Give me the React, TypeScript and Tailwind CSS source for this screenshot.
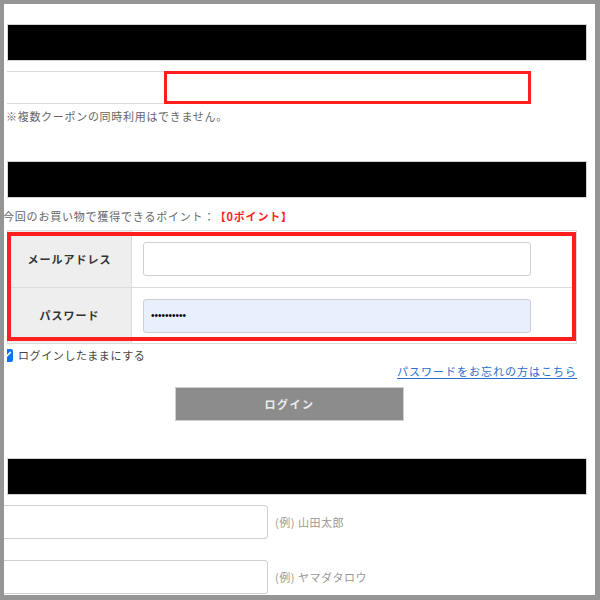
import { Check } from "lucide-react";

const font = "font-['Noto_Sans_CJK_JP','Noto_Sans',sans-serif]";

function Bar() {
    return <div className="h-[37px] w-[580px] bg-black border border-[#d4d4d4]" />;
}

export default function App() {
    return (
        <div className={`w-[600px] h-[600px] bg-[#959595] pt-[4px] pl-[4px] pr-[5px] pb-[5px] ${font}`}>
            <div className="h-full bg-white overflow-hidden">
                <div className="pl-[3px] pt-[20px]">
                    {/* クーポン */}
                    <Bar />
                    <div className="mt-[10px] flex h-[33px]">
                        <div className="w-[157px] border-y border-[#dcdcdc]" />
                        <div className="w-[367px] border-[3px] border-[#ff1f1f]" />
                    </div>
                    <p className="mt-[4px] -ml-[1px] text-[11px] leading-[16px] tracking-[0.7px] text-[#666]">
                        ※複数クーポンの同時利用はできません。
                    </p>

                    {/* ログイン */}
                    <div className="mt-[37px]">
                        <Bar />
                    </div>
                    <p className="mt-[10px] -ml-[4px] text-[11px] leading-[16px] tracking-[0.8px] text-[#666]">
                        今回のお買い物で獲得できるポイント：
                        <span className="ml-[5px] font-bold text-[#ff1f1f] tracking-[0.8px]">【0ポイント】</span>
                    </p>

                    <div className="relative mt-[6px] w-[570px] border border-[#dcdcdc]">
                        <div className="flex h-[57px] border-b border-[#dcdcdc]">
                            <div className="w-[124px] bg-[#eeeeee] border-r border-[#dcdcdc] flex items-center justify-center text-[11px] font-bold tracking-[1px] text-[#333]">
                                メールアドレス
                            </div>
                            <div className="flex items-center pl-[11px]">
                                <div className="h-[34px] w-[388px] rounded-[3px] border border-[#cfcfcf] bg-white" />
                            </div>
                        </div>
                        <div className="flex h-[55px]">
                            <div className="w-[124px] bg-[#eeeeee] border-r border-[#dcdcdc] flex items-center justify-center text-[11px] font-bold tracking-[1px] text-[#333]">
                                パスワード
                            </div>
                            <div className="flex items-center pl-[11px]">
                                <div className="h-[34px] w-[388px] rounded-[3px] border border-[#cfcfcf] bg-[#e8f0fe] flex items-center pl-[7px] font-['Liberation_Sans',sans-serif] text-[10px] text-black">
                                    ••••••••••
                                </div>
                            </div>
                        </div>
                        <div className="absolute left-[-1px] top-[1px] w-[569px] h-[109px] border-[4px] border-[#ff1f1f]" />
                    </div>

                    <label className="mt-[3px] flex items-center h-[16px] leading-[16px]">
                        <span className="w-[6px] h-[13px] overflow-hidden flex justify-end">
                            <span className="shrink-0 w-[13px] h-[13px] rounded-[2px] bg-[#0b75f5] flex items-center justify-center">
                                <Check className="w-[10px] h-[10px] text-white" strokeWidth={4} />
                            </span>
                        </span>
                        <span className="ml-[5px] text-[11px] tracking-[0.6px] text-[#444]">ログインしたままにする</span>
                    </label>

                    <div className="w-[570px] flex justify-end h-[16px] leading-[16px]">
                        <a className="text-[11px] leading-[16px] tracking-[1px] text-[#2a6ecf] underline underline-offset-2">
                            パスワードをお忘れの方はこちら
                        </a>
                    </div>

                    <button className="block mt-[8px] ml-[168px] w-[229px] h-[34px] bg-[#8c8c8c] border border-[#cfcfcf] text-[11px] font-bold tracking-[1.5px] text-[#ececec]">
                        ログイン
                    </button>

                    {/* お客様情報 */}
                    <div className="mt-[37px]">
                        <Bar />
                    </div>
                    <div className="mt-[10px] flex items-center -ml-[10px]">
                        <div className="w-[271px] h-[34px] rounded-[3px] border border-[#cfcfcf]" />
                        <span className="ml-[7px] text-[11px] tracking-[0.5px] text-[#999]">(例) 山田太郎</span>
                    </div>
                    <div className="mt-[21px] flex items-center -ml-[10px]">
                        <div className="w-[271px] h-[34px] rounded-[3px] border border-[#cfcfcf]" />
                        <span className="ml-[7px] text-[11px] tracking-[0.5px] text-[#999]">(例) ヤマダタロウ</span>
                    </div>
                </div>
            </div>
        </div>
    );
}
